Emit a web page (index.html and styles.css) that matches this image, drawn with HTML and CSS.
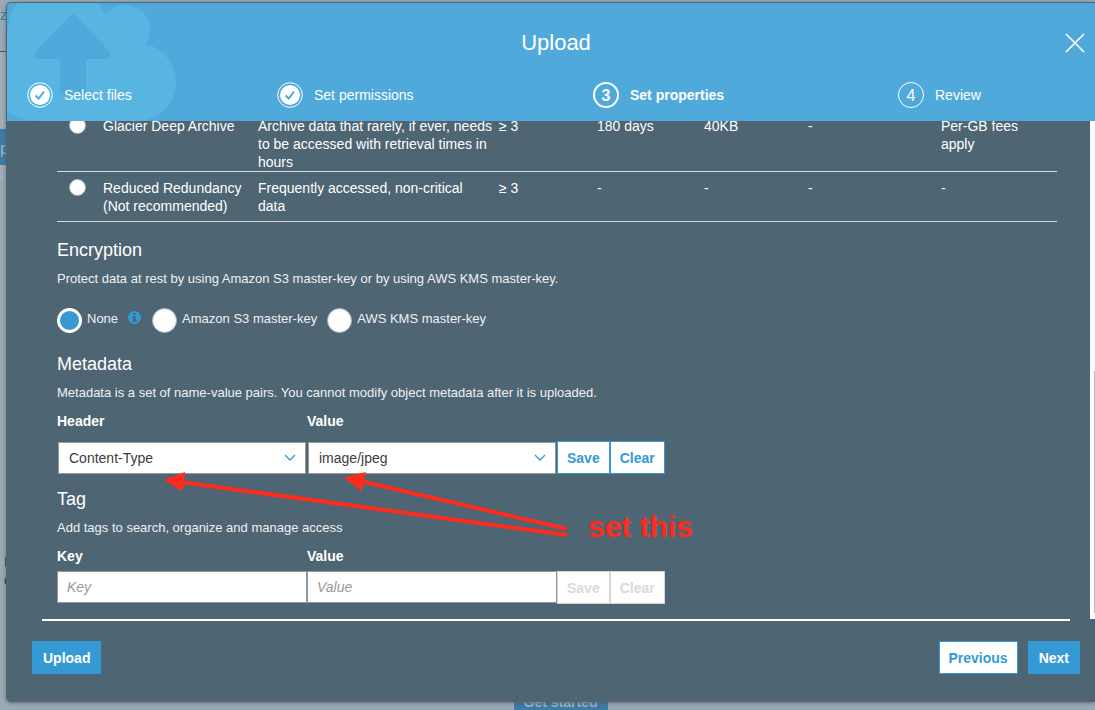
FILE: index.html
```
<!DOCTYPE html>
<html lang="en">
<head>
<meta charset="utf-8">
<meta name="viewport" content="width=device-width, initial-scale=1">
<title>Upload</title>
<link rel="stylesheet" href="styles.css">
</head>
<body>
<div class="page">
  <div class="page-bar">zo</div>
  <div class="page-tools"><span class="page-action">p</span></div>
  <div class="page-main">
    <p class="page-note">I<br>c</p>
    <button class="page-start" type="button">Get started</button>
  </div>
</div>

<div class="modal" role="dialog" aria-labelledby="title">
  <header class="head">
    <svg class="cloud" width="170" height="118" viewBox="7 3 170 118" aria-hidden="true">
      <g fill="#58b5e1">
        <circle cx="58" cy="32" r="50"/>
        <circle cx="125" cy="30" r="25"/>
        <circle cx="137" cy="82" r="39"/>
        <path d="M8 32H108L137 43V121H38Q18 120 7 111V32Z"/>
      </g>
      <path d="M71 15Q73 13 75 15L110 52Q112 58 107 59H86V90Q86 95 81 95H65Q60 95 60 90V59H38Q33 58 35 52Z" fill="#4fa9da"/>
    </svg>
    <h1 class="title" id="title">Upload</h1>
    <button class="close" type="button" aria-label="Close">
      <svg width="20" height="22" viewBox="0 0 20 22"><path d="M1 2L19 20M19 2L1 20" stroke="#fff" stroke-width="1.7" fill="none"/></svg>
    </button>
    <ol class="steps">
      <li class="step"><svg width="26" height="26" viewBox="0 0 26 26" aria-hidden="true"><circle cx="13" cy="13" r="12.3" fill="none" stroke="#fff"/><circle cx="13" cy="13" r="10" fill="#fff"/><path d="M8.5 13.5L11.7 16.5L17 9.5" fill="none" stroke="#4fa9da" stroke-width="2"/></svg>Select files</li>
      <li class="step"><svg width="26" height="26" viewBox="0 0 26 26" aria-hidden="true"><circle cx="13" cy="13" r="12.3" fill="none" stroke="#fff"/><circle cx="13" cy="13" r="10" fill="#fff"/><path d="M8.5 13.5L11.7 16.5L17 9.5" fill="none" stroke="#4fa9da" stroke-width="2"/></svg>Set permissions</li>
      <li class="step current"><span class="num">3</span>Set properties</li>
      <li class="step"><span class="num">4</span>Review</li>
    </ol>
  </header>

  <div class="body">
    <div class="content">
      <table class="classes">
        <colgroup><col class="c1"><col class="c2"><col class="c3"><col class="c4"><col class="c5"><col class="c6"><col class="c7"><col class="c8"></colgroup>
        <tbody>
        <tr>
          <td><input class="dot" type="radio" name="class" id="deep"></td>
          <td><label for="deep">Glacier Deep Archive</label></td>
          <td>Archive data that rarely, if ever, needs to be accessed with retrieval times in hours</td>
          <td>≥ 3</td><td>180 days</td><td>40KB</td><td>-</td><td>Per-GB fees apply</td>
        </tr>
        <tr>
          <td><input class="dot" type="radio" name="class" id="reduced"></td>
          <td><label for="reduced">Reduced Redundancy (Not recommended)</label></td>
          <td>Frequently accessed, non-critical data</td>
          <td>≥ 3</td><td>-</td><td>-</td><td>-</td><td>-</td>
        </tr>
        </tbody>
      </table>

      <h2 class="heading">Encryption</h2>
      <p class="info">Protect data at rest by using Amazon S3 master-key or by using AWS KMS master-key.</p>
      <div class="choices">
        <label class="choice"><input class="disc" type="radio" name="enc" checked><span class="choice-name">None</span></label>
        <svg class="hint" width="13" height="13" viewBox="0 0 13 13" role="img" aria-label="Information"><circle cx="6.5" cy="6.5" r="6.5" fill="#359ad4"/><path d="M5.3 2h2.4v2H5.3zM4.3 5h3.4v4.3h1v1.5H4.3V9.3h1V6.5h-1z" fill="#4e6573"/></svg>
        <label class="choice"><input class="disc" type="radio" name="enc"><span class="choice-name">Amazon S3 master-key</span></label>
        <label class="choice"><input class="disc" type="radio" name="enc"><span class="choice-name">AWS KMS master-key</span></label>
      </div>

      <h2 class="heading">Metadata</h2>
      <p class="info">Metadata is a set of name-value pairs. You cannot modify object metadata after it is uploaded.</p>
      <div class="pair labels">
        <label for="header">Header</label>
        <label for="value">Value</label>
      </div>
      <div class="pair selects">
        <div class="pick">
          <select id="header"><option>Content-Type</option></select>
          <svg width="12" height="8" viewBox="0 0 12 8" aria-hidden="true"><path d="M1 1L6 6L11 1" fill="none" stroke="#359ad4" stroke-width="1.3"/></svg>
        </div>
        <div class="pick">
          <select id="value"><option>image/jpeg</option></select>
          <svg width="12" height="8" viewBox="0 0 12 8" aria-hidden="true"><path d="M1 1L6 6L11 1" fill="none" stroke="#359ad4" stroke-width="1.3"/></svg>
        </div>
        <div class="acts"><button class="btn" type="button">Save</button><button class="btn" type="button">Clear</button></div>
      </div>

      <h2 class="heading tag">Tag</h2>
      <p class="info">Add tags to search, organize and manage access</p>
      <div class="pair labels">
        <label for="tagkey">Key</label>
        <label for="tagvalue">Value</label>
      </div>
      <div class="pair fields">
        <input class="field" id="tagkey" type="text" placeholder="Key">
        <input class="field" id="tagvalue" type="text" placeholder="Value">
        <div class="acts"><button class="btn" type="button" disabled>Save</button><button class="btn" type="button" disabled>Clear</button></div>
      </div>
    </div>
    <div class="track"><div class="thumb"></div></div>
  </div>

  <footer class="foot">
    <button class="btn solid" type="button">Upload</button>
    <div class="nav"><button class="btn" type="button">Previous</button><button class="btn solid" type="button">Next</button></div>
  </footer>

  <svg class="notes" width="540" height="90" viewBox="160 465 540 90">
    <g fill="#ff2b1c" stroke="#ff2b1c">
      <path d="M180 482L567 535M360 481L567 529" fill="none" stroke-width="4"/>
      <path d="M164 480L185 472L182.500 491.500ZM344 477.500L366 472L361.500 491.500Z" stroke="none"/>
    </g>
    <text class="notes-text" x="588" y="537">set this</text>
  </svg>
</div>
</body>
</html>
```
FILE: styles.css
```
* { box-sizing: border-box; }
body {
  margin: 0;
  height: 100vh;
  overflow: hidden;
  display: grid;
  grid-template: minmax(0, 1fr) / minmax(0, 1fr);
  background: #9aaab5;
  font: 14px/18px "Liberation Sans", Arial, sans-serif;
  color: #fff;
}
h1, h2, p, ol { margin: 0; padding: 0; font-weight: normal; }
button, input, select { font: inherit; margin: 0; }

.page { grid-area: 1 / 1; display: flex; flex-direction: column; overflow: hidden; }
.page-bar { height: 52px; padding-top: 6px; border-bottom: 1px solid #44596b; color: #35789f; }
.page-tools { height: 128px; padding-top: 77px; background: #a2aeb7; }
.page-action { display: block; width: 60px; height: 36px; background: #3b7da6; color: #a5b4bf; font-size: 16px; line-height: 40px; }
.page-main { flex: 1; display: flex; flex-direction: column; justify-content: space-between; }
.page-note { margin: 373px 0 0 4px; color: #222d35; }
.page-start { align-self: center; margin-left: 26px; width: 94px; height: 21px; padding: 0; border: 0; background: #3b7da6; color: #a5b4bf; font-weight: bold; line-height: 18px; padding-top: 4px; flex: none; }

.modal {
  grid-area: 1 / 1;
  position: relative;
  margin: 3px 0 9px 7px;
  display: flex;
  flex-direction: column;
  background: #4e6573;
  border-radius: 4px 0 0 4px;
  box-shadow: 0 0 0 1px #56646d, 0 1px 5px #46535c;
}
.head {
  flex: none;
  height: 118px;
  display: grid;
  grid-template: 79px 1fr / 1fr auto;
  align-items: center;
  background: #4fa9da;
  border-radius: 4px 0 0 0;
  overflow: hidden;
}
.cloud { grid-area: 1 / 1 / 3 / 2; align-self: start; }
.title { grid-area: 1 / 1 / 2 / 3; padding-left: 10px; text-align: center; font-size: 22px; line-height: 28px; }
.close { grid-area: 1 / 2; display: flex; margin-right: 10px; padding: 0; border: 0; background: none; }
.steps {
  grid-area: 2 / 1 / 3 / 3;
  align-self: start;
  display: grid;
  grid-template-columns: 250fr 316fr 305fr 197fr;
  padding-left: 20px;
  list-style: none;
}
.step { display: flex; align-items: center; gap: 11px; line-height: 26px; }
.current { font-weight: bold; }
.num { width: 26px; height: 26px; border: 1px solid #fff; border-radius: 50%; text-align: center; font-size: 16px; line-height: 25px; }
.current .num { border-width: 2px; line-height: 23px; }

.body { flex: 1; min-height: 0; display: flex; overflow: hidden; }
.content { flex: 1; min-width: 0; padding: 0 33px 0 50px; }
.track { width: 5px; padding: 250px 0 6px 4px; background: #fafafa; }
.thumb { height: 100%; background: #b9b9b9; }

.classes { width: 100%; margin-top: -11px; table-layout: fixed; border-collapse: separate; border-spacing: 0; }
.classes td { height: 50px; padding: 7px 6px 0 0; border-bottom: 1px solid #d5dbdf; vertical-align: top; }
.classes td:first-child { padding-left: 12px; }
.classes td:nth-child(2) { padding-right: 0; }
.c1 { width: 4.6%; } .c2 { width: 15.5%; } .c3 { width: 24.1%; } .c4 { width: 9.8%; }
.c5 { width: 10.7%; } .c6 { width: 10.4%; } .c7 { width: 13.3%; } .c8 { width: 11.6%; }
.dot, .disc { appearance: none; display: block; border-radius: 50%; background: #fff; border: 1px solid #a5afb5; }
.dot { width: 17px; height: 17px; }
.disc { width: 25px; height: 25px; }
.disc:checked { background: #359ad4; border: 3px solid #fff; }

.heading { margin-top: 16px; font-size: 18px; line-height: 24px; }
.info { margin-top: 8px; font-size: 13px; color: #eef1f3; }
.choices { display: flex; align-items: center; margin: 20px 0 19px; font-size: 13px; }
.choice { display: flex; align-items: center; gap: 5px; margin-right: 10px; color: #eef1f3; }
.choice-name { padding-bottom: 3px; }
.hint { margin: 0 11px 6px 0; }
.choices + .heading { margin-top: 0; }
.pair { display: grid; grid-template-columns: 250px 250px auto; }
.labels { margin-top: 10px; font-weight: bold; }
.selects { margin-top: 11px; }
.fields { margin-top: 6px; }
.pick { display: grid; grid-template-columns: 1fr 22px; align-items: center; margin: 1px; }
.pick select { grid-area: 1 / 1 / 2 / 3; appearance: none; width: 100%; height: 32px; padding: 0 26px 0 10px; border: 1px solid #999; border-radius: 0; background: #fff; color: #3c3c3c; }
.pick svg { grid-area: 1 / 2; pointer-events: none; }
.field { min-width: 0; height: 32px; padding: 0 9px; border: 1px solid #8f989d; border-radius: 0; background: #fff; color: #444; }
.field::placeholder { color: #999; font-style: italic; opacity: 1; }
.acts { display: flex; }
.btn { height: 33px; padding: 0 9px; border: 1px solid #359ad4; background: #fff; color: #359ad4; font-weight: bold; }
.btn:disabled { border-color: #d5d5d5; color: #d8dada; }
.solid { padding: 0 10px; background: #359ad4; color: #fff; }
.tag { margin-top: 12px; }

.foot { flex: none; display: flex; justify-content: space-between; padding: 22px 15px 27px 25px; position: relative; }
.foot::before { content: ""; position: absolute; top: 0; left: 35px; right: 25px; height: 2px; background: #fff; }
.nav { display: flex; gap: 10px; }
.notes { position: absolute; left: 153px; top: 462px; pointer-events: none; }
.notes-text { fill: #ff2b1c; font-size: 30px; font-weight: bold; }
```
